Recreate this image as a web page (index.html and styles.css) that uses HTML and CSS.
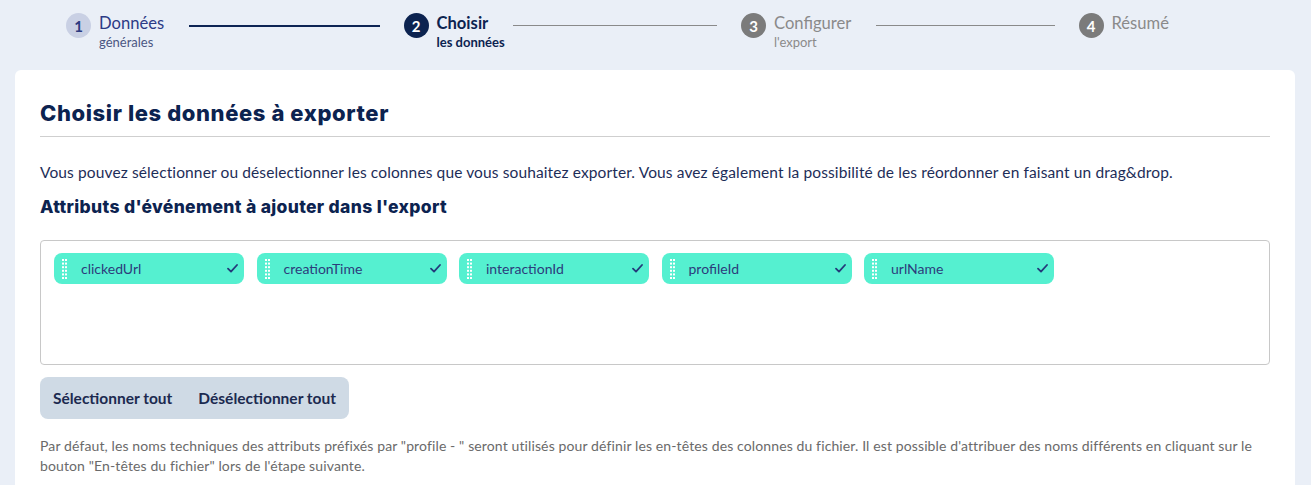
FILE: index.html
```html
<!DOCTYPE html>
<html lang="fr">
<head>
<meta charset="utf-8">
<title>Export</title>
<link rel="stylesheet" href="styles.css">
</head>
<body>
<nav class="stepper">
  <div class="step done">
    <span class="num">1</span>
    <div class="label"><div class="title">Données</div><div class="sub">générales</div></div>
    <span class="line"></span>
  </div>
  <div class="step active">
    <span class="num">2</span>
    <div class="label"><div class="title">Choisir</div><div class="sub">les données</div></div>
    <span class="line"></span>
  </div>
  <div class="step todo">
    <span class="num">3</span>
    <div class="label"><div class="title">Configurer</div><div class="sub">l'export</div></div>
    <span class="line"></span>
  </div>
  <div class="step todo last">
    <span class="num">4</span>
    <div class="label"><div class="title">Résumé</div></div>
  </div>
</nav>

<main class="card">
  <h1 class="heading">Choisir les données à exporter</h1>
  <p class="intro">Vous pouvez sélectionner ou déselectionner les colonnes que vous souhaitez exporter. Vous avez également la possibilité de les réordonner en faisant un drag&amp;drop.</p>
  <h2 class="subheading">Attributs d'événement à ajouter dans l'export</h2>
  <div class="chipbox">
    <div class="chip"><svg class="grip" width="5" height="20" viewBox="0 0 5 20"><g fill="#fff"><rect x="0" y="0" width="2" height="2"/><rect x="3" y="0" width="2" height="2"/><rect x="0" y="3.6" width="2" height="2"/><rect x="3" y="3.6" width="2" height="2"/><rect x="0" y="7.2" width="2" height="2"/><rect x="3" y="7.2" width="2" height="2"/><rect x="0" y="10.8" width="2" height="2"/><rect x="3" y="10.8" width="2" height="2"/><rect x="0" y="14.4" width="2" height="2"/><rect x="3" y="14.4" width="2" height="2"/><rect x="0" y="18" width="2" height="2"/><rect x="3" y="18" width="2" height="2"/></g></svg><span class="chip-text">clickedUrl</span><svg class="check" width="11" height="9" viewBox="0 0 11 9"><path d="M1 4.6 L4 7.6 L10 1" fill="none" stroke="#243a7a" stroke-width="1.8" stroke-linecap="round" stroke-linejoin="round"/></svg></div>
    <div class="chip"><svg class="grip" width="5" height="20" viewBox="0 0 5 20"><g fill="#fff"><rect x="0" y="0" width="2" height="2"/><rect x="3" y="0" width="2" height="2"/><rect x="0" y="3.6" width="2" height="2"/><rect x="3" y="3.6" width="2" height="2"/><rect x="0" y="7.2" width="2" height="2"/><rect x="3" y="7.2" width="2" height="2"/><rect x="0" y="10.8" width="2" height="2"/><rect x="3" y="10.8" width="2" height="2"/><rect x="0" y="14.4" width="2" height="2"/><rect x="3" y="14.4" width="2" height="2"/><rect x="0" y="18" width="2" height="2"/><rect x="3" y="18" width="2" height="2"/></g></svg><span class="chip-text">creationTime</span><svg class="check" width="11" height="9" viewBox="0 0 11 9"><path d="M1 4.6 L4 7.6 L10 1" fill="none" stroke="#243a7a" stroke-width="1.8" stroke-linecap="round" stroke-linejoin="round"/></svg></div>
    <div class="chip"><svg class="grip" width="5" height="20" viewBox="0 0 5 20"><g fill="#fff"><rect x="0" y="0" width="2" height="2"/><rect x="3" y="0" width="2" height="2"/><rect x="0" y="3.6" width="2" height="2"/><rect x="3" y="3.6" width="2" height="2"/><rect x="0" y="7.2" width="2" height="2"/><rect x="3" y="7.2" width="2" height="2"/><rect x="0" y="10.8" width="2" height="2"/><rect x="3" y="10.8" width="2" height="2"/><rect x="0" y="14.4" width="2" height="2"/><rect x="3" y="14.4" width="2" height="2"/><rect x="0" y="18" width="2" height="2"/><rect x="3" y="18" width="2" height="2"/></g></svg><span class="chip-text">interactionId</span><svg class="check" width="11" height="9" viewBox="0 0 11 9"><path d="M1 4.6 L4 7.6 L10 1" fill="none" stroke="#243a7a" stroke-width="1.8" stroke-linecap="round" stroke-linejoin="round"/></svg></div>
    <div class="chip"><svg class="grip" width="5" height="20" viewBox="0 0 5 20"><g fill="#fff"><rect x="0" y="0" width="2" height="2"/><rect x="3" y="0" width="2" height="2"/><rect x="0" y="3.6" width="2" height="2"/><rect x="3" y="3.6" width="2" height="2"/><rect x="0" y="7.2" width="2" height="2"/><rect x="3" y="7.2" width="2" height="2"/><rect x="0" y="10.8" width="2" height="2"/><rect x="3" y="10.8" width="2" height="2"/><rect x="0" y="14.4" width="2" height="2"/><rect x="3" y="14.4" width="2" height="2"/><rect x="0" y="18" width="2" height="2"/><rect x="3" y="18" width="2" height="2"/></g></svg><span class="chip-text">profileId</span><svg class="check" width="11" height="9" viewBox="0 0 11 9"><path d="M1 4.6 L4 7.6 L10 1" fill="none" stroke="#243a7a" stroke-width="1.8" stroke-linecap="round" stroke-linejoin="round"/></svg></div>
    <div class="chip"><svg class="grip" width="5" height="20" viewBox="0 0 5 20"><g fill="#fff"><rect x="0" y="0" width="2" height="2"/><rect x="3" y="0" width="2" height="2"/><rect x="0" y="3.6" width="2" height="2"/><rect x="3" y="3.6" width="2" height="2"/><rect x="0" y="7.2" width="2" height="2"/><rect x="3" y="7.2" width="2" height="2"/><rect x="0" y="10.8" width="2" height="2"/><rect x="3" y="10.8" width="2" height="2"/><rect x="0" y="14.4" width="2" height="2"/><rect x="3" y="14.4" width="2" height="2"/><rect x="0" y="18" width="2" height="2"/><rect x="3" y="18" width="2" height="2"/></g></svg><span class="chip-text">urlName</span><svg class="check" width="11" height="9" viewBox="0 0 11 9"><path d="M1 4.6 L4 7.6 L10 1" fill="none" stroke="#243a7a" stroke-width="1.8" stroke-linecap="round" stroke-linejoin="round"/></svg></div>
  </div>
  <div class="btngroup">
    <button class="btn">Sélectionner tout</button>
    <button class="btn">Désélectionner tout</button>
  </div>
  <p class="note">Par défaut, les noms techniques des attributs préfixés par "profile - " seront utilisés pour définir les en-têtes des colonnes du fichier. Il est possible d'attribuer des noms différents en cliquant sur le bouton "En-têtes du fichier" lors de l'étape suivante.</p>
</main>
</body>
</html>
```

FILE: styles.css
```css
* { box-sizing: border-box; }
html, body { margin: 0; padding: 0; }
body {
  background: #eaeff7;
  font-family: "Lato", "Noto Sans", sans-serif;
  color: #1d2d58;
  height: 485px;
  overflow: hidden;
}

/* Stepper */
.stepper {
  display: flex;
  padding: 13px 0 0 66px;
  height: 70px;
}
.step {
  display: flex;
  align-items: flex-start;
  flex: 0 0 337.5px;
}
.step.last { flex: 0 0 auto; }
.num {
  width: 25px;
  height: 25px;
  border-radius: 50%;
  display: flex;
  align-items: center;
  justify-content: center;
  font-family: "Lato", sans-serif;
  font-weight: 700;
  font-size: 15px;
  flex: none;
}
.label { margin-left: 8px; }
.title { font-size: 16.6px; line-height: 20px; white-space: nowrap; }
.sub { font-size: 13px; line-height: 16px; width: 0; white-space: nowrap; margin-top: 1px; }
.line {
  flex: 1;
  height: 1px;
  margin: 12px 24px 0 25px;
}
.step.done .num { background: #c9d0e4; color: #2b3a80; }
.step.done .title { color: #2d3b86; }
.step.done .sub { color: #4b5683; }
.step.done .line { background: #0d2454; height: 2px; }
.step.active .num { background: #0c2350; color: #fff; }
.step.active .title { color: #0c2350; font-weight: 700; }
.step.active .sub { color: #0c2350; font-weight: 700; }
.step.active .line { background: #8a8a8a; }
.step.todo .num { background: #7b7b7b; color: #fff; }
.step.todo .title { color: #8a8a8a; }
.step.todo .sub { color: #8a8a8a; }
.step.todo .line { background: #8a8a8a; }

/* Card */
.card {
  background: #fff;
  margin: 0 16px 0 15px;
  border-radius: 6px;
  padding: 28px 25px 40px;
  min-height: 480px;
}
.heading {
  margin: 0;
  font-family: "Inter", "Noto Sans", sans-serif;
  font-weight: 800;
  font-size: 22px;
  line-height: 30px;
  color: #0c2350;
  padding-bottom: 8px;
  border-bottom: 1px solid #cfcfcf;
  letter-spacing: 0.6px;
}
.intro {
  margin: 25px 0 0;
  font-size: 15.5px;
  line-height: 20px;
  letter-spacing: 0.12px;
  color: #1d2d58;
}
.subheading {
  margin: 14px 0 0;
  font-family: "Inter", "Noto Sans", sans-serif;
  font-weight: 800;
  font-size: 17.5px;
  line-height: 22px;
  letter-spacing: 0.32px;
  color: #0c2350;
}
.chipbox {
  margin-top: 22px;
  border: 1px solid #c8c8c8;
  border-radius: 4px;
  height: 125px;
  padding: 12px 13px;
  display: flex;
  align-items: flex-start;
  gap: 12.5px;
}
.chip {
  width: 190px;
  height: 31px;
  background: #55f0d0;
  border-radius: 8px;
  display: flex;
  align-items: center;
  padding: 0 6px 0 8px;
}
.grip { flex: none; }
.chip-text {
  flex: 1;
  margin-left: 14px;
  font-size: 14px;
  color: #2c3c7c;
}
.check { flex: none; }

.btngroup {
  margin-top: 12px;
  display: inline-flex;
  background: #cfdae5;
  border-radius: 8px;
  height: 42px;
}
.btn {
  border: 0;
  background: transparent;
  font-family: "Lato", "Noto Sans", sans-serif;
  font-weight: 700;
  font-size: 15.5px;
  color: #1c2a50;
  padding: 0 13px;
  cursor: pointer;
}
.note {
  margin: 17px 0 0;
  font-size: 14px;
  line-height: 20px;
  letter-spacing: 0.12px;
  color: #6a6a6a;
}
```
